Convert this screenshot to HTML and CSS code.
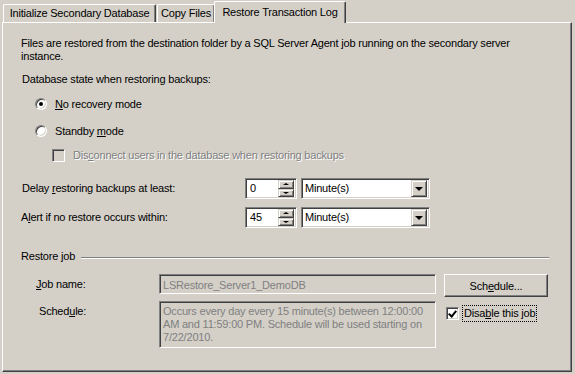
FILE: index.html
```html
<!DOCTYPE html>
<html lang="en">
<head>
  <meta charset="UTF-8">
  <title>Log Shipping - Restore Transaction Log</title>
  <link rel="stylesheet" href="styles.css">
</head>
<body>
  <div class="tabs">
    <div class="tab tab-init">Initialize Secondary Database</div>
    <div class="tab tab-copy">Copy Files</div>
    <div class="tab tab-restore active">Restore Transaction Log</div>
  </div>

  <div class="panel">
    <p class="intro">Files are restored from the destination folder by a SQL Server Agent job running on the secondary server<br>instance.</p>

    <p class="state-label">Database state when restoring backups:</p>

    <div class="option option-first">
      <span class="radio checked"></span>
      <span><u>N</u>o recovery mode</span>
    </div>
    <div class="option option-second">
      <span class="radio"></span>
      <span>Standby <u>m</u>ode</span>
    </div>
    <div class="option option-sub">
      <span class="checkbox disabled"></span>
      <span class="disabled-text">Dis<u>c</u>onnect users in the database when restoring backups</span>
    </div>

    <div class="field-row field-delay">
      <span class="field-label">Delay <u>r</u>estoring backups at least:</span>
      <div class="spin sunken">
        <span class="spin-value">0</span>
        <span class="spin-buttons">
          <span class="spin-btn"><i class="arrow-up"></i></span>
          <span class="spin-btn"><i class="arrow-down"></i></span>
        </span>
      </div>
      <div class="combo sunken">
        <span class="combo-value">Minute(s)</span>
        <span class="combo-btn"><i class="arrow-down big"></i></span>
      </div>
    </div>

    <div class="field-row field-alert">
      <span class="field-label">A<u>l</u>ert if no restore occurs within:</span>
      <div class="spin sunken">
        <span class="spin-value">45</span>
        <span class="spin-buttons">
          <span class="spin-btn"><i class="arrow-up"></i></span>
          <span class="spin-btn"><i class="arrow-down"></i></span>
        </span>
      </div>
      <div class="combo sunken">
        <span class="combo-value">Minute(s)</span>
        <span class="combo-btn"><i class="arrow-down big"></i></span>
      </div>
    </div>

    <div class="group-title">
      <span>Restore job</span>
      <span class="group-line"></span>
    </div>

    <div class="job-row">
      <span class="job-label"><u>J</u>ob name:</span>
      <div class="textbox sunken">LSRestore_Server1_DemoDB</div>
      <button class="button">Sch<u>e</u>dule...</button>
    </div>

    <div class="job-row schedule-row">
      <span class="job-label schedule-label">Sched<u>u</u>le:</span>
      <div class="textarea sunken">Occurs every day every 15 minute(s) between 12:00:00<br>AM and 11:59:00 PM. Schedule will be used starting on<br>7/22/2010.</div>
      <div class="disable-job">
        <span class="checkbox checked"></span>
        <span class="focus-label">Disa<u>b</u>le this job</span>
      </div>
    </div>
  </div>
</body>
</html>
```

FILE: styles.css
```css
:root {
  --face: #d4d0c8;
  --light: #ffffff;
  --shadow: #808080;
  --dark: #404040;
  --text: #000000;
}

* {
  margin: 0;
  padding: 0;
  box-sizing: border-box;
}

body {
  width: 575px;
  height: 374px;
  background: var(--face);
  color: var(--text);
  font-family: "Liberation Sans", Arial, sans-serif;
  font-size: 11px;
  line-height: 13px;
  letter-spacing: -0.2px;
  overflow: hidden;
}

u {
  text-decoration: underline;
  text-underline-offset: 1px;
}

/* Classic 3D borders */
.sunken {
  border: 1px solid;
  border-color: var(--shadow) var(--light) var(--light) var(--shadow);
  box-shadow: inset 1px 1px var(--dark), inset -1px -1px var(--face);
}

/* Tabs */
.tabs {
  display: flex;
  align-items: flex-end;
  height: 22px;
  padding-left: 3px;
  position: relative;
  z-index: 1;
}

.tab {
  height: 18px;
  line-height: 17px;
  text-align: center;
  border-top: 1px solid var(--light);
  border-left: 1px solid var(--light);
  border-right: 1px solid var(--dark);
  border-radius: 2px 2px 0 0;
  box-shadow: inset -1px 0 var(--shadow);
  white-space: nowrap;
}

.tab-init {
  width: 153px;
}

.tab-copy {
  width: 58px;
  margin-left: 1px;
}

.tab-restore {
  width: 132px;
}

.tab.active {
  height: 22px;
  line-height: 20px;
  margin-bottom: -1px;
  margin-left: -1px;
  background: var(--face);
}

/* Panel */
.panel {
  margin-left: 2px;
  width: 570px;
  height: 350px;
  border-top: 1px solid var(--light);
  border-left: 1px solid var(--light);
  border-right: 1px solid var(--dark);
  border-bottom: 1px solid var(--dark);
  box-shadow: inset -1px -1px var(--shadow);
  padding: 14px 0 0 18px;
}

.intro {
  width: 520px;
}

.state-label {
  margin-top: 10px;
  padding-left: 1px;
}

.option {
  display: flex;
  align-items: center;
  height: 14px;
}

.option-first {
  margin-top: 11px;
  padding-left: 14px;
  gap: 8px;
}

.option-second {
  margin-top: 13px;
  padding-left: 14px;
  gap: 8px;
}

.option-sub {
  margin-top: 10px;
  padding-left: 31px;
  gap: 8px;
}

.radio {
  width: 12px;
  height: 12px;
  border-radius: 50%;
  background: var(--light);
  border: 1px solid;
  border-color: var(--shadow) var(--light) var(--light) var(--shadow);
  box-shadow: inset 1px 1px var(--dark), inset -1px -1px var(--face);
  display: flex;
  align-items: center;
  justify-content: center;
}

.radio.checked::after {
  content: "";
  width: 4px;
  height: 4px;
  border-radius: 50%;
  background: #000;
}

.checkbox {
  width: 13px;
  height: 13px;
  flex-shrink: 0;
  background: var(--light);
  border: 1px solid;
  border-color: var(--shadow) var(--light) var(--light) var(--shadow);
  box-shadow: inset 1px 1px var(--dark), inset -1px -1px var(--face);
  position: relative;
}

.checkbox.disabled {
  background: var(--face);
}

.checkbox.checked::after {
  content: "";
  position: absolute;
  left: 3px;
  top: 1px;
  width: 3px;
  height: 6px;
  border-right: 2px solid #000;
  border-bottom: 2px solid #000;
  transform: rotate(40deg);
}

.disabled-text {
  color: var(--shadow);
  text-shadow: 1px 1px var(--light);
}

/* Numeric fields */
.field-row {
  display: flex;
  align-items: center;
  height: 21px;
}

.field-delay {
  margin-top: 16px;
}

.field-alert {
  margin-top: 8px;
}

.field-label {
  width: 224px;
  padding-left: 1px;
}

.field-alert .field-label {
  padding-left: 0;
}

.spin {
  width: 52px;
  height: 21px;
  background: var(--light);
  display: flex;
  align-items: center;
  justify-content: space-between;
  padding: 2px 2px 2px 4px;
}

.spin-value {
  line-height: 15px;
}

.spin-buttons {
  display: flex;
  flex-direction: column;
  width: 16px;
  height: 17px;
}

.spin-btn {
  flex: 1;
  display: flex;
  align-items: center;
  justify-content: center;
  background: var(--face);
  border: 1px solid;
  border-color: var(--face) var(--dark) var(--dark) var(--face);
  box-shadow: inset 1px 1px var(--light), inset -1px -1px var(--shadow);
}

.arrow-up,
.arrow-down {
  display: block;
  width: 0;
  height: 0;
  border-left: 3px solid transparent;
  border-right: 3px solid transparent;
}

.arrow-up {
  border-bottom: 2px solid #000;
}

.arrow-down {
  border-top: 2px solid #000;
}

.arrow-down.big {
  border-left-width: 4px;
  border-right-width: 4px;
  border-top-width: 4px;
}

.combo {
  width: 129px;
  height: 21px;
  margin-left: 4px;
  background: var(--light);
  display: flex;
  align-items: center;
  justify-content: space-between;
  padding: 2px 2px 2px 3px;
}

.combo-btn {
  width: 16px;
  height: 17px;
  display: flex;
  align-items: center;
  justify-content: center;
  background: var(--face);
  border: 1px solid;
  border-color: var(--face) var(--dark) var(--dark) var(--face);
  box-shadow: inset 1px 1px var(--light), inset -1px -1px var(--shadow);
}

/* Restore job group */
.group-title {
  display: flex;
  align-items: center;
  gap: 6px;
  margin-top: 22px;
  width: 528px;
}

.group-line {
  flex: 1;
  height: 2px;
  border-top: 1px solid var(--shadow);
  border-bottom: 1px solid var(--light);
  margin-top: 2px;
}

.job-row {
  display: flex;
  align-items: flex-start;
  margin-top: 11px;
}

.schedule-row {
  margin-top: 4px;
}

.job-label {
  width: 138px;
  padding-left: 15px;
  line-height: 20px;
}

.schedule-label {
  padding-left: 18px;
  line-height: 13px;
  padding-top: 4px;
}

.textbox {
  width: 277px;
  height: 20px;
  line-height: 16px;
  padding: 2px 3px;
  color: var(--shadow);
}

.textarea {
  width: 277px;
  height: 47px;
  padding: 3px 3px;
  color: var(--shadow);
  line-height: 13px;
  white-space: nowrap;
  overflow: hidden;
}

.button {
  width: 104px;
  height: 23px;
  margin-left: 8px;
  background: var(--face);
  font: inherit;
  letter-spacing: inherit;
  color: inherit;
  border: 1px solid;
  border-color: var(--light) var(--dark) var(--dark) var(--light);
  box-shadow: inset -1px -1px var(--shadow);
  padding-top: 1px;
}

.disable-job {
  display: flex;
  align-items: center;
  gap: 4px;
  margin-left: 10px;
  margin-top: 5px;
}

.focus-label {
  outline: 1px dotted #000;
  outline-offset: 0;
  padding: 1px 1px 1px 1px;
}
```
